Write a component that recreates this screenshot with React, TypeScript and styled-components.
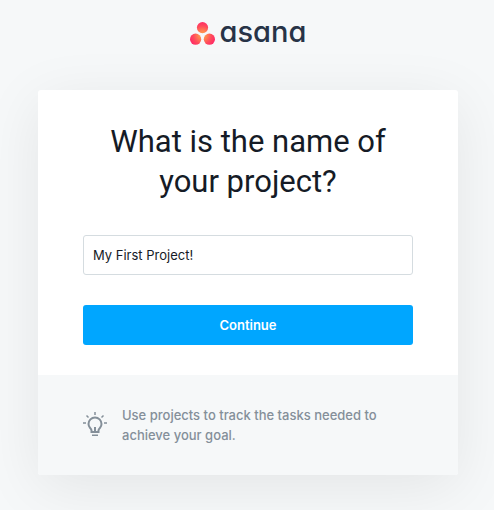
import React, { useState } from "react";
import styled, { createGlobalStyle } from "styled-components";

const GlobalStyle = createGlobalStyle`
  *, *::before, *::after { box-sizing: border-box; }
  body {
    margin: 0;
    background: #f6f8f9;
    color: #151b26;
    font-family: Inter, "Liberation Sans", sans-serif;
  }
`;

const Page = styled.main`
  display: flex;
  flex-direction: column;
  align-items: center;
  min-height: 100vh;
  padding: 16px 36px 35px 38px;
`;

const Logo = styled.div`
  display: flex;
  align-items: flex-end;
  gap: 5px;
  height: 30px;
  margin-bottom: 44px;
`;

const LogoMark = styled.svg`
  width: 25px;
  height: 24px;
`;

const LogoName = styled.span`
  color: #273347;
  font-size: 29px;
  font-weight: 500;
  line-height: 28px;
  font-feature-settings: "cv11";
`;

const Card = styled.section`
  width: 100%;
  max-width: 420px;
  overflow: hidden;
  border-radius: 3px;
  background: #fff;
  box-shadow: 0 12px 60px rgba(0, 0, 0, 0.08);
`;

const Form = styled.form`
  display: flex;
  flex-direction: column;
  gap: 30px;
  padding: 32px 45px 30px;
`;

const Title = styled.label`
  padding-bottom: 3px;
  font-family: Roboto, "Liberation Sans", sans-serif;
  font-size: 31px;
  line-height: 40px;
  text-align: center;
`;

const NameInput = styled.input`
  width: 100%;
  height: 40px;
  padding: 0 9px;
  border: 1px solid #d5dce0;
  border-radius: 3px;
  outline: none;
  background: #fff;
  color: #151b26;
  font-family: inherit;
  font-size: 13px;
`;

const SubmitButton = styled.button`
  width: 100%;
  height: 40px;
  padding: 0;
  border: 0;
  border-radius: 3px;
  background: #00a6ff;
  color: #fff;
  font-family: inherit;
  font-size: 13px;
  font-weight: 600;
  cursor: pointer;
`;

const Tip = styled.footer`
  display: flex;
  align-items: center;
  gap: 15px;
  padding: 30px 45px;
  background: #f6f8f9;
`;

const BulbIcon = styled.svg`
  flex: none;
  width: 24px;
  height: 26px;
`;

const TipText = styled.p`
  margin: 0;
  color: #848f99;
  font-size: 13px;
  font-weight: 500;
  line-height: 20px;
`;

export default function App() {
  const [name, setName] = useState("My First Project!");

  return (
    <>
      <GlobalStyle />
      <Page>
        <Logo>
          <LogoMark viewBox="0 0 25 24" aria-hidden="true">
            <defs>
              <radialGradient id="glow" gradientUnits="userSpaceOnUse" cx="12.5" cy="13" r="14">
                <stop offset="0" stopColor="#ffa04a" />
                <stop offset="0.3" stopColor="#ff8450" />
                <stop offset="0.65" stopColor="#ff4a5c" />
                <stop offset="1" stopColor="#ff2668" />
              </radialGradient>
            </defs>
            <g fill="url(#glow)">
              <circle cx="12.5" cy="5.6" r="5.6" />
              <circle cx="5.6" cy="17.2" r="5.6" />
              <circle cx="19.4" cy="17.2" r="5.6" />
            </g>
          </LogoMark>
          <LogoName>asana</LogoName>
        </Logo>
        <Card>
          <Form onSubmit={(event) => event.preventDefault()}>
            <Title htmlFor="project-name">What is the name of your project?</Title>
            <NameInput
              id="project-name"
              value={name}
              onChange={(event) => setName(event.target.value)}
            />
            <SubmitButton type="submit">Continue</SubmitButton>
          </Form>
          <Tip>
            <BulbIcon viewBox="0 0 24 26" fill="none" stroke="#848f99" aria-hidden="true">
              <path
                strokeWidth="2"
                d="M8.5 20v-1.5c0-1-.7-1.7-1.4-2.5A6.300 6.300 0 0 1 5.500 12a6.500 6.500 0 0 1 13 0c0 1.600-.7 3-1.600 4s-1.400 1.500-1.400 2.500V20zM12 15v5"
              />
              <path strokeWidth="1.5" d="M9 23.200h6M12 0v3M0 11h3M21 11h3M3.500 3.500l2 2M20.500 3.500l-2 2" />
            </BulbIcon>
            <TipText>Use projects to track the tasks needed to achieve your goal.</TipText>
          </Tip>
        </Card>
      </Page>
    </>
  );
}
